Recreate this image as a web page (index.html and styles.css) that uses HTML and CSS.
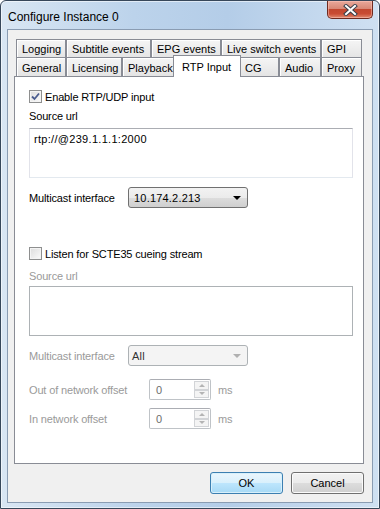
FILE: index.html
```html
<!DOCTYPE html>
<html lang="en">
<head>
    <meta charset="UTF-8">
    <title>Configure Instance 0</title>
    <link rel="stylesheet" href="styles.css">
</head>
<body>

<section class="window">
    <header class="titlebar">
        <span class="title">Configure Instance 0</span>
        <div class="close">
            <svg width="15" height="12" viewBox="0 0 15 12">
                <path d="M3 2 L12 10 M12 2 L3 10" stroke="#3a3f4a" stroke-width="4" stroke-linecap="square"/>
                <path d="M3 2 L12 10 M12 2 L3 10" stroke="#ffffff" stroke-width="2" stroke-linecap="square"/>
            </svg>
        </div>
    </header>

    <section class="client">
        <section class="tabs">
            <div class="tabrow back">
                <div class="tab">Logging</div>
                <div class="tab">Subtitle events</div>
                <div class="tab">EPG events</div>
                <div class="tab">Live switch events</div>
                <div class="tab">GPI</div>
            </div>
            <div class="tabrow front">
                <div class="tab">General</div>
                <div class="tab">Licensing</div>
                <div class="tab">Playback</div>
                <div class="tab active">RTP Input</div>
                <div class="tab">CG</div>
                <div class="tab">Audio</div>
                <div class="tab">Proxy</div>
            </div>

            <div class="panel">
                <label class="checkrow first">
                    <span class="check checked">
                        <svg width="9" height="9" viewBox="0 0 9 9">
                            <path d="M1 4.5 L3.5 7 L8 1.5" fill="none" stroke="#4a5c8f" stroke-width="1.8"/>
                        </svg>
                    </span>
                    Enable RTP/UDP input
                </label>

                <div class="label">Source url</div>
                <div class="textbox">rtp://@239.1.1.1:2000</div>

                <div class="field">
                    <span class="field-label">Multicast interface</span>
                    <div class="combo">
                        <span>10.174.2.213</span>
                        <span class="arrow"></span>
                    </div>
                </div>

                <label class="checkrow second">
                    <span class="check"></span>
                    Listen for SCTE35 cueing stream
                </label>

                <div class="label disabled">Source url</div>
                <div class="textbox disabled"></div>

                <div class="field disabled">
                    <span class="field-label">Multicast interface</span>
                    <div class="combo disabled">
                        <span>All</span>
                        <span class="arrow"></span>
                    </div>
                </div>

                <div class="field disabled offset">
                    <span class="field-label wide">Out of network offset</span>
                    <div class="spin">
                        <span class="value">0</span>
                        <span class="spin-btns">
                            <span class="spin-btn up"></span>
                            <span class="spin-btn down"></span>
                        </span>
                    </div>
                    <span class="unit">ms</span>
                </div>

                <div class="field disabled offset">
                    <span class="field-label wide">In network offset</span>
                    <div class="spin">
                        <span class="value">0</span>
                        <span class="spin-btns">
                            <span class="spin-btn up"></span>
                            <span class="spin-btn down"></span>
                        </span>
                    </div>
                    <span class="unit">ms</span>
                </div>
            </div>
        </section>

        <section class="buttons">
            <button class="btn default">OK</button>
            <button class="btn">Cancel</button>
        </section>
    </section>
</section>

</body>
</html>
```

FILE: styles.css
```css
body {
    margin: 0;
    background: #ffffff;
    font-family: "Liberation Sans", Arial, sans-serif;
    font-size: 11px;
    color: #000000;
}

.window {
    width: 380px;
    height: 509px;
    box-sizing: border-box;
    border: 1px solid #37475a;
    border-radius: 6px 6px 0 0;
    padding: 0 6px 5px 6px;
    background: linear-gradient(to right, #d9e6f3 0%, #bcd3eb 35%, #b4cde8 60%, #cfe0f2 100%);
    box-shadow: inset 0 0 0 1px rgba(255, 255, 255, 0.55);
}

.titlebar {
    height: 28px;
    display: flex;
    justify-content: space-between;
    align-items: flex-start;
}

.title {
    font-size: 12px;
    padding: 9px 0 0 1px;
    color: #000000;
}

.close {
    width: 46px;
    height: 18px;
    box-sizing: border-box;
    border: 1px solid #6e2a20;
    border-top: none;
    border-radius: 0 0 5px 5px;
    background: linear-gradient(#e9a99b 0%, #d88876 45%, #c2472f 50%, #c94b33 75%, #e08a6f 100%);
    display: flex;
    justify-content: center;
    align-items: center;
    box-shadow: inset 0 0 0 1px rgba(255, 200, 190, 0.5);
}

.client {
    height: 474px;
    box-sizing: border-box;
    border: 1px solid #8a9cb2;
    background: #f0f0f0;
    padding: 9px 8px 8px 6px;
}

/* tabs */
.tabrow {
    display: grid;
    margin-left: 2px;
}
.back {
    grid-template-columns: 50px 85px 70px 100px 41px;
    height: 18px;
}
.front {
    grid-template-columns: 50px 56px 53px 64px 40px 42px 41px;
    height: 19px;
}
.tab {
    box-sizing: border-box;
    border: 1px solid #898c95;
    border-bottom: none;
    background: linear-gradient(#f5f5f5, #e4e4e4);
    box-shadow: inset 1px 1px 0 #ffffff;
    padding: 3px 0 0 5px;
    white-space: nowrap;
}
.back .tab {
    height: 19px;
}
.front .tab {
    padding-top: 4px;
}
.tab.active {
    position: relative;
    z-index: 1;
    margin: -2px -2px -1px -2px;
    background: #ffffff;
    box-shadow: none;
    padding: 5px 0 0 8px;
}

.panel {
    height: 388px;
    box-sizing: border-box;
    border: 1px solid #898c95;
    background: #ffffff;
    padding: 0 0 0 14px;
    letter-spacing: -0.15px;
}

.checkrow {
    display: flex;
    align-items: center;
    gap: 3px;
    height: 13px;
}
.checkrow.first {
    margin-top: 13px;
}
.checkrow.second {
    margin-top: 39px;
}
.check {
    width: 13px;
    height: 13px;
    box-sizing: border-box;
    border: 1px solid #8e8f8f;
    background: linear-gradient(135deg, #dcdcdc, #fbfbfb);
    box-shadow: inset 0 0 0 1px #f4f4f4;
    display: flex;
    justify-content: center;
    align-items: center;
}

.label {
    line-height: 13px;
    margin-top: 7px;
}
.disabled,
.disabled .field-label,
.disabled .unit {
    color: #9a9a9a;
}
.label.disabled {
    margin-top: 10px;
}

.textbox {
    width: 324px;
    height: 50px;
    box-sizing: border-box;
    margin-top: 5px;
    border: 1px solid #e2e3ea;
    border-top-color: #abadb3;
    border-bottom-color: #e3e9ef;
    padding: 4px 4px;
    background: #ffffff;
    color: #000000;
    letter-spacing: 0.3px;
}
.textbox.disabled {
    margin-top: 3px;
    border-color: #adb2b5;
}

.field {
    display: flex;
    align-items: center;
    margin-top: 9px;
}
.field-label {
    width: 99px;
}
.field-label.wide {
    width: 120px;
}
.field.offset {
    margin-top: 13px;
}
.field.offset + .field.offset {
    margin-top: 8px;
}

.combo {
    width: 120px;
    height: 21px;
    box-sizing: border-box;
    border: 1px solid #707070;
    border-radius: 3px;
    background: linear-gradient(#f2f2f2 0%, #ebebeb 50%, #dddddd 50%, #cfcfcf 100%);
    display: flex;
    justify-content: space-between;
    align-items: center;
    padding: 0 6px 0 5px;
    color: #000000;
    letter-spacing: 0.2px;
}
.combo .arrow {
    width: 0;
    height: 0;
    border-left: 4px solid transparent;
    border-right: 4px solid transparent;
    border-top: 4px solid #000000;
}
.combo.disabled {
    border-color: #adb2b5;
    background: #f4f4f4;
    color: #333333;
    padding-left: 3px;
}
.combo.disabled .arrow {
    border-top-color: #b0b0b0;
}

.spin {
    width: 62px;
    height: 21px;
    box-sizing: border-box;
    border: 1px solid #bfc3c7;
    border-top-color: #abadb3;
    border-radius: 2px;
    background: #ffffff;
    display: flex;
    justify-content: space-between;
    align-items: stretch;
    padding: 1px;
}
.spin .value {
    padding: 3px 0 0 5px;
    color: #6d6d6d;
}
.spin-btns {
    width: 15px;
    display: flex;
    flex-direction: column;
}
.spin-btn {
    flex: 1;
    border: 1px solid #d2d4d7;
    background: #f4f4f4;
    display: flex;
    justify-content: center;
    align-items: center;
}
.spin-btn::after {
    content: "";
    border-left: 3px solid transparent;
    border-right: 3px solid transparent;
}
.spin-btn.up::after {
    border-bottom: 3px solid #b4b4b4;
}
.spin-btn.down::after {
    border-top: 3px solid #b4b4b4;
}
.unit {
    margin-left: 7px;
}

/* bottom buttons */
.buttons {
    display: flex;
    justify-content: flex-end;
    gap: 8px;
    margin-top: 8px;
    padding-right: 0;
}
.btn {
    width: 73px;
    height: 22px;
    font-family: "Liberation Sans", Arial, sans-serif;
    font-size: 11px;
    border: 1px solid #707070;
    border-radius: 3px;
    background: linear-gradient(#f2f2f2 0%, #ebebeb 50%, #dddddd 50%, #cfcfcf 100%);
    box-shadow: inset 0 0 0 1px #fbfbfb;
    color: #000000;
    padding: 0;
}
.btn.default {
    border-color: #3c7fb1;
    background: linear-gradient(#eaf6fd 0%, #d9f0fc 50%, #bee6fd 50%, #a7d9f5 100%);
    box-shadow: inset 0 0 0 1px #d8f0fb;
}
```
